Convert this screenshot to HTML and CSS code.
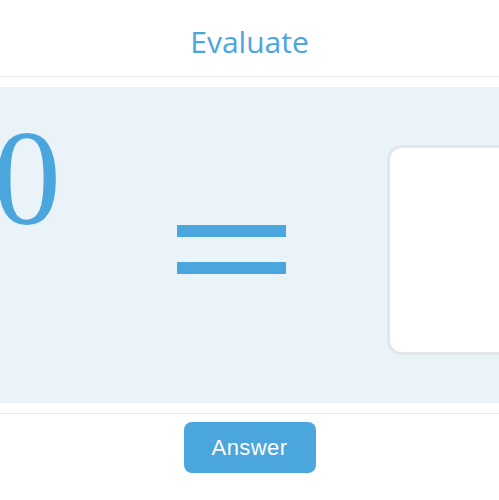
FILE: index.html
```html
<!DOCTYPE html>
<html>
<head>
<meta charset="utf-8">
<link rel="stylesheet" href="styles.css">
</head>
<body>
<div class="page">
  <header class="header">
    <h1 class="title">Evaluate</h1>
  </header>
  <section class="panel">
    <div class="row">
      <span class="num">0</span>
      <span class="equals"><span class="bar"></span><span class="bar"></span></span>
      <div class="answer-box"></div>
    </div>
  </section>
  <footer class="footer">
    <button class="btn">Answer</button>
  </footer>
</div>
</body>
</html>
```
FILE: styles.css
```css
html, body {
  margin: 0;
  padding: 0;
  background: #ffffff;
}
.page {
  width: 499px;
  height: 500px;
  overflow: hidden;
}
.header {
  box-sizing: border-box;
  height: 77px;
  padding-top: 21px;
  border-bottom: 1px solid #e4e6e7;
  text-align: center;
}
.title {
  margin: 0;
  font-family: "Open Sans", sans-serif;
  font-weight: 400;
  font-size: 30px;
  line-height: normal;
  color: #4ba6dd;
}
.panel {
  margin-top: 10px;
  height: 316px;
  background: #eaf4f8;
  overflow: hidden;
}
.row {
  display: flex;
  align-items: center;
  height: 100%;
}
.num {
  align-self: flex-start;
  margin-top: 23px;
  margin-left: -7px;
  font-family: "Liberation Serif", serif;
  font-size: 136px;
  line-height: 1;
  color: #4ba6dd;
}
.equals {
  display: flex;
  flex-direction: column;
  gap: 25px;
  margin-left: 116px;
  margin-top: 9px;
}
.bar {
  display: block;
  width: 109px;
  height: 12px;
  background: #4ba6dd;
}
.answer-box {
  flex: none;
  box-sizing: border-box;
  width: 170px;
  height: 210px;
  margin-left: 101px;
  margin-top: 10px;
  background: #ffffff;
  border: 3px solid #e3e6e8;
  border-radius: 15px;
}
.footer {
  margin-top: 10px;
  border-top: 1px solid #e4e6e7;
  display: flex;
  justify-content: center;
  padding-top: 8px;
}
.btn {
  width: 132px;
  height: 51px;
  border: none;
  border-radius: 8px;
  background: #4ba6dd;
  color: #ffffff;
  font-family: "Liberation Sans", Arial, sans-serif;
  font-size: 22px;
  letter-spacing: 0.4px;
  padding: 0;
}
```
